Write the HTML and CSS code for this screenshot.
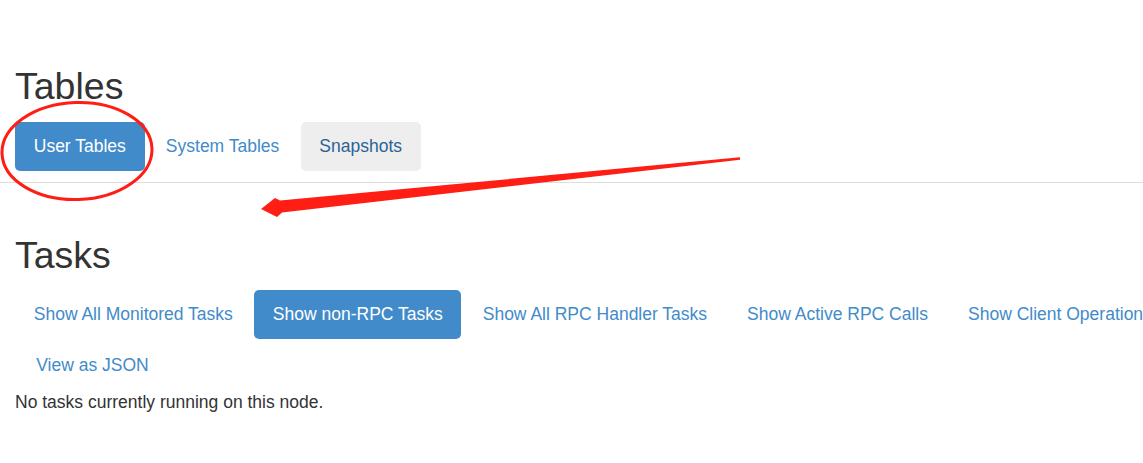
FILE: index.html
```html
<!DOCTYPE html>
<html lang="en">
<head>
<meta charset="utf-8">
<title>Tables and Tasks</title>
<link rel="stylesheet" href="styles.css">
</head>
<body>
<div class="page">
  <section class="block block-tables">
    <h2 class="title">Tables</h2>
    <ul class="pills">
      <li class="pill active"><a href="#">User Tables</a></li>
      <li class="pill"><a href="#">System Tables</a></li>
      <li class="pill hover"><a href="#">Snapshots</a></li>
    </ul>
  </section>
  <div class="divider"></div>
  <section class="block block-tasks">
    <h2 class="title">Tasks</h2>
    <ul class="pills wrap">
      <li class="pill"><a href="#">Show All Monitored Tasks</a></li>
      <li class="pill active"><a href="#">Show non-RPC Tasks</a></li>
      <li class="pill"><a href="#">Show All RPC Handler Tasks</a></li>
      <li class="pill"><a href="#">Show Active RPC Calls</a></li>
      <li class="pill"><a href="#">Show Client Operations</a></li>
      <li class="pill"><a href="#">View as JSON</a></li>
    </ul>
    <p class="note">No tasks currently running on this node.</p>
  </section>
  <svg class="annot" width="1143" height="463" viewBox="0 0 1143 463" aria-hidden="true">
    <ellipse cx="77" cy="151" rx="75" ry="48.5" transform="rotate(-2 77 151)" fill="none" stroke="#ff1e14" stroke-width="3"/>
    <polygon points="261,209 275,198 280,200.5 740,157.3 740,159.7 282,212.5 277,217" fill="#ff1e14"/>
  </svg>
</div>
</body>
</html>
```
FILE: styles.css
```css
html, body {
  margin: 0;
  padding: 0;
  overflow: hidden;
  background: #fff;
}
body {
  font-family: "Liberation Sans", Arial, Helvetica, sans-serif;
  font-size: 17.5px;
  line-height: 25px;
  color: #333;
}
.page {
  position: relative;
  width: 1260px;
  padding-top: 66.4px;
}
.block {
  padding: 0 15px;
}
.title {
  margin: 0 0 14.35px;
  font-size: 37.5px;
  font-weight: 500;
  line-height: 1.1;
  color: #333;
}
.block-tasks .title {
  margin-bottom: 13.35px;
}
.block-tasks {
  padding-top: 52.4px;
}
.pills {
  display: flex;
  flex-wrap: wrap;
  list-style: none;
  margin: 0;
  padding: 0;
}
.pills.wrap {
  row-gap: 1.5px;
}
.pill {
  margin-left: 2.5px;
}
.pill:first-child {
  margin-left: 0;
}
.pill a {
  display: block;
  padding: 12.25px 18.75px;
  line-height: 24.5px;
  border-radius: 5px;
  color: #428bca;
  text-decoration: none;
  white-space: nowrap;
}
.pill.active a {
  background: #428bca;
  color: #fff;
}
.pill.hover a {
  background: #eee;
  color: #2a6496;
}
.divider {
  height: 1px;
  background: #ddd;
  margin-top: 11.5px;
  width: 1143px;
}
.block-tasks {
  margin-top: -0.5px;
}
.note {
  margin: 1px 0 0;
}
.annot {
  position: absolute;
  left: 0;
  top: 0;
  pointer-events: none;
}
```
